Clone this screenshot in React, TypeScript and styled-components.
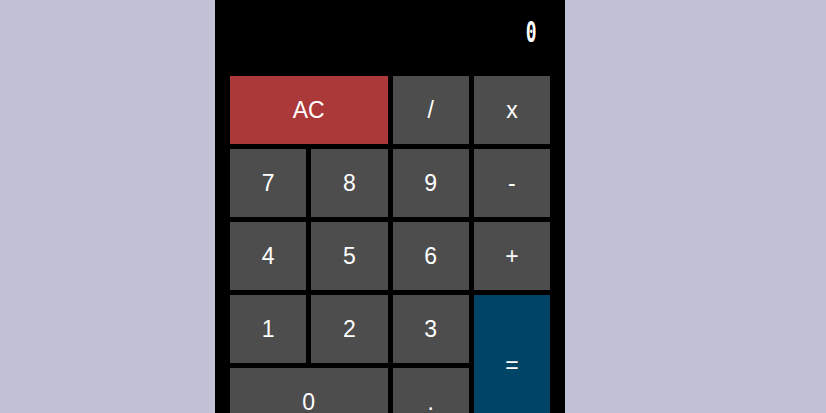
import styled, { createGlobalStyle } from "styled-components";

const GlobalStyle = createGlobalStyle`
	html, body {
		margin: 0;
		padding: 0;
		background: #c2c2d6;
	}
`;

const Page = styled.main`
	display: flex;
	padding-left: 215px;
	min-height: 413px;
`;

const Calculator = styled.section`
	width: 320px;
	background: #000;
	padding: 0 15px 15px;
`;

const Display = styled.div`
	height: 76px;
	box-sizing: border-box;
	padding: 14px 14px 0 0;
	text-align: right;
	color: #fff;
	font-family: "DejaVu Sans Mono", monospace;
	font-size: 29px;
	line-height: 36px;
`;

// the reference readout is a tall narrow slashed zero, so squeeze the glyph
const Readout = styled.span`
	display: inline-block;
	font-weight: bold;
	transform: scaleX(0.62);
	transform-origin: right center;
`;

const Keys = styled.div`
	display: grid;
	grid-template-columns: repeat(4, 1fr);
	grid-auto-rows: 68px;
	gap: 5px;
`;

type Tone = "clear" | "equals" | "plain";

const tones: Record<Tone, string> = {
	clear: "#ac3939",
	equals: "#004466",
	plain: "#4d4d4d",
};

const Key = styled.button<{ $tone?: Tone; $wide?: boolean; $tall?: boolean }>`
	border: none;
	margin: 0;
	padding: 0;
	background: ${(p) => tones[p.$tone || "plain"]};
	color: #fff;
	font-family: "Liberation Sans", Arial, sans-serif;
	font-size: 23px;
	cursor: pointer;
	grid-column: ${(p) => (p.$wide ? "span 2" : "auto")};
	grid-row: ${(p) => (p.$tall ? "span 2" : "auto")};
`;

export default function App() {
	return (
		<>
			<GlobalStyle />
			<Page>
				<Calculator>
					<Display>
						<Readout>0</Readout>
					</Display>
					<Keys>
						<Key $tone="clear" $wide>AC</Key>
						<Key>/</Key>
						<Key>x</Key>
						<Key>7</Key>
						<Key>8</Key>
						<Key>9</Key>
						<Key>-</Key>
						<Key>4</Key>
						<Key>5</Key>
						<Key>6</Key>
						<Key>+</Key>
						<Key>1</Key>
						<Key>2</Key>
						<Key>3</Key>
						<Key $tone="equals" $tall>=</Key>
						<Key $wide>0</Key>
						<Key>.</Key>
					</Keys>
				</Calculator>
			</Page>
		</>
	);
}
